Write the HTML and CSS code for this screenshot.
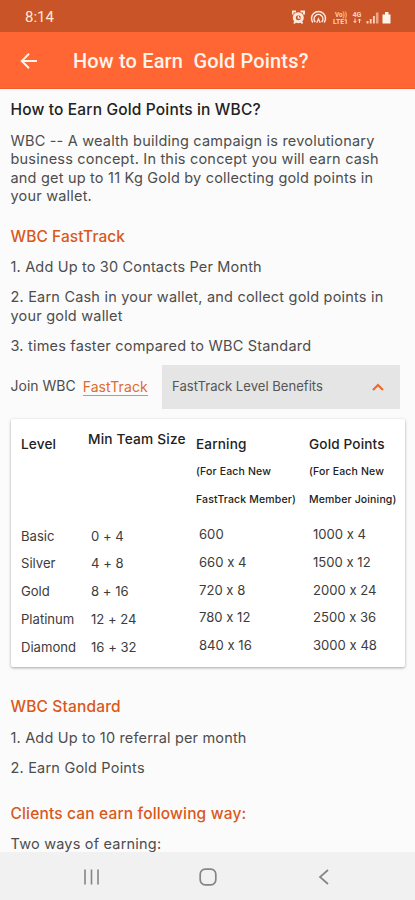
FILE: index.html
```html
<!DOCTYPE html>
<html lang="en">
<head>
<meta charset="utf-8">
<title>How to Earn Gold Points?</title>
<link rel="stylesheet" href="styles.css">
</head>
<body>
<div class="screen">
  <header class="status">
    <span class="time">8:14</span>
    <svg class="status-icons" width="104" height="20" viewBox="0 0 104 20" fill="none" stroke="#ffe9dc" stroke-width="1.5">
      <path d="M.5 6.500v-3h3.500M12 6.500v-3H8.500M2 15.500l1.500-2M10.500 15.500L9 13.500" stroke-width="2"/>
      <circle cx="6.300" cy="9.700" r="4" stroke-width="3"/>
      <path d="M6.300 7.500v2.700h2" stroke-width="1.200"/>
      <path d="M20.800 14.500a7 7 0 1 1 11.400 0M23.300 14a4.400 4.400 0 1 1 6.400 0" stroke-width="1.500"/>
      <path d="M24.800 14.800l1.700-4 1.700 4" stroke-width="1.300"/>
      <g fill="#ffd0b8" stroke="none" class="tiny">
        <text x="43" y="8.500" textLength="12" lengthAdjust="spacingAndGlyphs">Vo))</text>
        <text x="41" y="15.500" textLength="15" lengthAdjust="spacingAndGlyphs">LTE1</text>
        <text x="60.500" y="8.500" textLength="9" lengthAdjust="spacingAndGlyphs">4G</text>
      </g>
      <path d="M63 10.500v4m-1.300-1.500l1.300 1.500 1.300-1.500M67.500 15v-4m-1.300 1.500l1.300-1.500 1.300 1.500" stroke-width=".9"/>
      <path d="M75.500 15.500v-2.500M78.700 15.500v-4.500M81.900 15.500v-7.500" stroke-width="1.900" stroke="#ffd0b8"/>
      <path d="M85.200 15.500V4.500" stroke-width="2.600" stroke="#f0a583"/>
      <path d="M93 4h3.500v2.500h2V15.500h-8V6.500h2.500z" fill="#fff3ea" stroke="none"/>
    </svg>
  </header>
  <div class="appbar">
    <svg class="back" width="18" height="18" viewBox="0 0 18 18" fill="none" stroke="#fff4ec" stroke-width="2"><path d="M17 9H2.500M9 1.800L1.800 9 9 16.200"/></svg>
    <h1>How to Earn&nbsp; Gold Points?</h1>
  </div>
  <main>
    <h2 class="lead">How to Earn Gold Points in WBC?</h2>
    <p class="intro">WBC -- A wealth building campaign is revolutionary<br>business concept. In this concept you will earn cash<br>and get up to 11 Kg Gold by collecting gold points in<br>your wallet.</p>
    <h2 class="fast">WBC FastTrack</h2>
    <p class="first">1. Add Up to 30 Contacts Per Month</p>
    <p>2. Earn Cash in your wallet, and collect gold points in<br>your gold wallet</p>
    <p>3. times faster compared to WBC Standard</p>
    <div class="join">
      <span>Join WBC</span><a>FastTrack</a>
      <div class="benefits"><span>FastTrack Level Benefits</span>
        <svg width="14" height="10" viewBox="0 0 14 10" fill="none" stroke="#ec6a32" stroke-width="2.200"><path d="M2 8l5-5 5 5"/></svg>
      </div>
    </div>
    <section class="card">
      <div class="col level"><b>Level</b><span>Basic</span><span>Silver</span><span>Gold</span><span>Platinum</span><span>Diamond</span></div>
      <div class="col team"><b>Min Team Size</b><span>0 + 4</span><span>4 + 8</span><span>8 + 16</span><span>12 + 24</span><span>16 + 32</span></div>
      <div class="col earning"><b>Earning<small>(For Each New<br>FastTrack Member)</small></b><span>600</span><span>660 x 4</span><span>720 x 8</span><span>780 x 12</span><span>840 x 16</span></div>
      <div class="col points"><b>Gold Points<small>(For Each New<br>Member Joining)</small></b><span>1000 x 4</span><span>1500 x 12</span><span>2000 x 24</span><span>2500 x 36</span><span>3000 x 48</span></div>
    </section>
    <h2 class="standard">WBC Standard</h2>
    <p class="first">1. Add Up to 10 referral per month</p>
    <p>2. Earn Gold Points</p>
    <h2 class="clients">Clients can earn following way:</h2>
    <p class="last">Two ways of earning:</p>
  </main>
  <nav>
    <svg width="18" height="18" viewBox="0 0 18 18" fill="none" stroke="#858585" stroke-width="1.600"><path d="M2 1.500v15M8.500 1.500v15M15 1.500v15"/></svg>
    <svg width="18" height="18" viewBox="0 0 18 18" fill="none" stroke="#858585" stroke-width="1.700"><rect x="1.200" y="1.200" width="15.600" height="15.600" rx="5"/></svg>
    <svg width="18" height="18" viewBox="0 0 18 18" fill="none" stroke="#858585" stroke-width="1.700"><path d="M14 2L6 9l8 7"/></svg>
  </nav>
</div>
</body>
</html>
```
FILE: styles.css
```css
* { box-sizing: border-box; }
body { margin: 0; background: #fbfbfb; }
.screen {
  width: 415px; height: 900px; overflow: hidden;
  display: flex; flex-direction: column;
  font-family: Inter, "Liberation Sans", sans-serif;
  font-feature-settings: "calt" 0;
  font-size: 14.5px; line-height: 18.5px; color: #4d4d4d;
}
.status {
  flex: 0 0 32px; background: #c95427; color: #ffe9dc;
  display: flex; align-items: center; justify-content: space-between;
  padding: 3px 19px 0 25px;
  font-family: Roboto, sans-serif; font-size: 15px;
}
.tiny { font: bold 7px Roboto, sans-serif; }
.appbar {
  flex: 0 0 57px; background: #ff6633; border-bottom: 1px solid #f25c2c;
  display: flex; align-items: center; padding: 1px 0 0 20px;
}
h1 { margin: 1px 0 0 35px; font: 500 20px/24px Roboto, sans-serif; color: #fff4ec; letter-spacing: .16px; }
main { flex: 1; min-height: 0; overflow: hidden; padding: 11px 10px 0 10.500px; background: #fbfbfb; }
h2 { margin: 0; font-size: 15.500px; line-height: 19px; font-weight: 500; color: #d9581a; white-space: nowrap; letter-spacing: .16px; }
p { margin: 11.500px 0 0; letter-spacing: .2px; white-space: nowrap; }
.lead { color: #222; }
.intro { margin-top: 12.500px; }
.fast { margin-top: 21px; letter-spacing: .08px; }
.first { margin-top: 12.500px; letter-spacing: .17px; }
.join { display: flex; align-items: center; height: 44px; margin-top: 9.500px; font-size: 14px; }
.join a { margin-left: 7px; color: #e06b30; border-bottom: 1px solid #e58a5b; line-height: 17px; letter-spacing: .08px; }
.benefits {
  margin-left: auto; margin-right: 5px; width: 238px; height: 44px; background: #e5e5e5;
  display: flex; align-items: center; justify-content: space-between; padding: 0 15px 0 10px;
  font-size: 13.100px; color: #555;
}
.card {
  height: 247.500px; margin-top: 10.500px; padding: 11.500px 0 0 10.500px;
  background: #fff; border-radius: 2px; box-shadow: 0 1px 3px rgba(0,0,0,.35);
  display: grid; grid-template-columns: 67px 108px 113px 1fr;
  font-size: 13.100px; color: #3c3c3c; white-space: nowrap;
}
.col { display: flex; flex-direction: column; line-height: 27.800px; }
.col b { height: 92px; font-weight: 500; font-size: 13.600px; color: #222; letter-spacing: .15px; }
.col small { display: block; font-size: 10.500px; line-height: 27.500px; }
.team b { margin-top: -5px; height: 97px; font-size: 13.700px; letter-spacing: .2px; }
.team span { padding-left: 3px; }
.earning b, .points b { height: 90.500px; }
.earning span { padding-left: 3px; }
.points span { padding-left: 4px; }
.standard { margin-top: 30.500px; }
.clients { margin-top: 27px; }
.last { margin-top: 12px; }
nav {
  flex: 0 0 48px; background: #f1f1f1; display: flex; align-items: center;
  justify-content: space-between; padding: 2px 83px 0 83px;
}
```
